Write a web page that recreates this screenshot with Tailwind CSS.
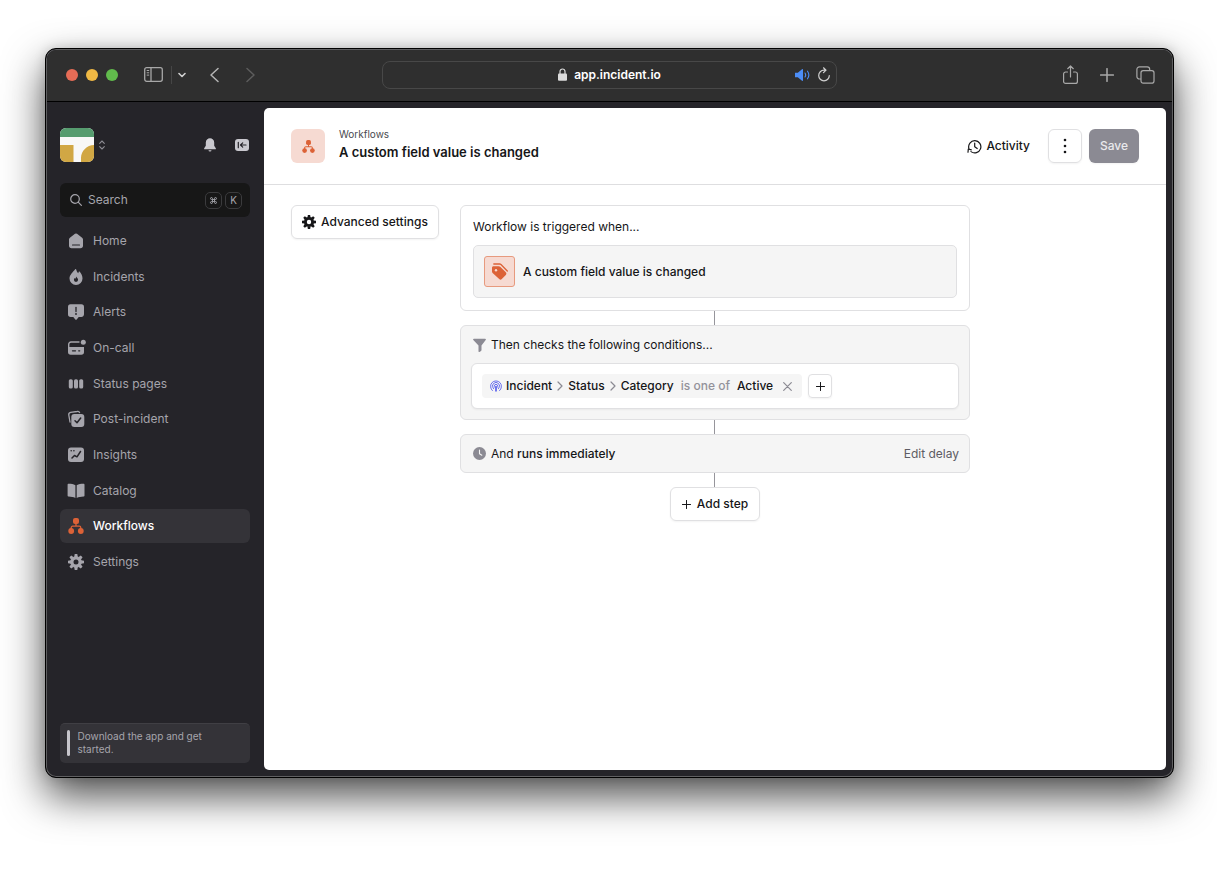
<!DOCTYPE html>
<html lang="en">
<head>
    <meta charset="UTF-8">
    <meta name="viewport" content="width=device-width, initial-scale=1.0">
    <title>A custom field value is changed | Workflows</title>
    <script src="https://cdn.jsdelivr.net/npm/@tailwindcss/browser@4"></script>
</head>
<body class="bg-white font-['Inter',sans-serif] text-xs leading-4 text-[#161618]">
    <!-- Shared icon shapes -->
    <svg class="hidden">
        <symbol id="icon-workflow" viewBox="0 0 16 16">
            <path d="M8 5v3.2M3.2 11V9.700a1.500 1.500 0 0 1 1.500-1.500h6.600a1.500 1.500 0 0 1 1.500 1.500V11" fill="none" stroke="currentColor" stroke-width="1.300"/>
            <rect x="5" y="0" width="6" height="6" rx="2" fill="currentColor"/>
            <circle cx="3.200" cy="13" r="2.900" fill="currentColor"/>
            <circle cx="12.800" cy="13" r="2.900" fill="currentColor"/>
        </symbol>
        <symbol id="icon-gear" viewBox="0 0 16 16">
            <g fill="currentColor">
                <path fill-rule="evenodd" d="M8 2.200a5.800 5.800 0 1 0 0 11.600a5.800 5.800 0 0 0 0-11.600zM8 5.500a2.500 2.500 0 1 1 0 5a2.500 2.500 0 0 1 0-5z"/>
                <path d="M6.700 0h2.600l.5 3h-3.600zM6.700 16h2.600l.5-3h-3.600zM0 6.700v2.600l3 .5v-3.600zM16 6.700v2.600l-3 .5v-3.600z"/>
                <path transform="rotate(45 8 8)" d="M6.700 0h2.600l.5 3h-3.600zM6.700 16h2.600l.5-3h-3.600zM0 6.700v2.600l3 .5v-3.600zM16 6.700v2.600l-3 .5v-3.600z"/>
            </g>
        </symbol>
        <symbol id="icon-plus" viewBox="0 0 10 10">
            <path d="M5 .5v9M.5 5h9" fill="none" stroke="currentColor" stroke-width="1.100" stroke-linecap="round"/>
        </symbol>
        <symbol id="icon-chevron" viewBox="0 0 6 10">
            <path d="M1 1l4 4-4 4" fill="none" stroke="currentColor" stroke-width="1.200" stroke-linecap="round" stroke-linejoin="round"/>
        </symbol>
    </svg>

    <div class="flex min-h-screen pt-12 pr-[43px] pb-[91px] pl-[45px]">
        <div class="flex flex-1 flex-col overflow-hidden rounded-[11px] border border-black bg-[#252429] shadow-[0_18px_42px_rgba(0,0,0,0.7),0_0_12px_rgba(0,0,0,0.15)] inset-ring inset-ring-[#5f5f61]">

            <!-- Browser toolbar -->
            <header class="m-px mb-0 flex h-[52px] items-center rounded-t-[9px] border-b border-black bg-[#2f2f2f] px-[17px] pb-0.5 text-[#a8a8a8]">
                <div class="flex flex-1 items-center">
                    <div class="ml-0.5 flex gap-2">
                        <span class="size-3 rounded-full bg-[#e66c56]"></span>
                        <span class="size-3 rounded-full bg-[#f0b944]"></span>
                        <span class="size-3 rounded-full bg-[#61bb4c]"></span>
                    </div>
                    <button class="ml-[26px]" aria-label="Sidebar">
                        <svg class="h-[15px] w-[19px]" viewBox="0 0 19 15" fill="none" stroke="currentColor" stroke-width="1.300">
                            <rect x=".7" y=".7" width="17.600" height="13.600" rx="2"/>
                            <path d="M7 1v13"/>
                            <path d="M2.700 3.500h2.500M2.700 5.800h2.500M2.700 8.100h2.500" stroke-width="1"/>
                        </svg>
                    </button>
                    <span class="ml-2 h-[18px] w-px bg-[#464646]"></span>
                    <button class="ml-1.5" aria-label="Tab groups">
                        <svg class="h-3 w-2" viewBox="0 0 8 12" fill="none" stroke="#d0d0d0" stroke-width="1.600" stroke-linecap="round" stroke-linejoin="round"><path d="M1 4.500l3 3 3-3"/></svg>
                    </button>
                    <button class="ml-6" aria-label="Back">
                        <svg class="h-4 w-[9px]" viewBox="0 0 9 16" fill="none" stroke="#b4b4b4" stroke-width="1.500" stroke-linecap="round" stroke-linejoin="round"><path d="M8 1.500L1 8l7 6.500"/></svg>
                    </button>
                    <button class="ml-[27px]" aria-label="Forward">
                        <svg class="h-4 w-[9px]" viewBox="0 0 9 16" fill="none" stroke="#5c5c5c" stroke-width="1.500" stroke-linecap="round" stroke-linejoin="round"><path d="M1 1.500L8 8l-7 6.500"/></svg>
                    </button>
                </div>

                <div class="flex h-7 w-[455px] items-center rounded-lg border border-[#484848] px-1.5 text-white">
                    <span class="flex-1"></span>
                    <svg class="mr-[7px] h-[13px] w-[9px]" viewBox="0 0 9 13"><path d="M2 6V3.500a2.500 2.500 0 0 1 5 0V6" fill="none" stroke="#dcdcdc" stroke-width="1.200"/><rect y="5.500" width="9" height="7.300" rx="1" fill="#dcdcdc"/></svg>
                    <span class="font-semibold">app.incident.io</span>
                    <span class="flex flex-1 items-center justify-end gap-2">
                        <svg class="h-3 w-[15px]" viewBox="0 0 15 12"><path d="M0 3.800h2.800L7 .3c.5-.4 1-.2 1 .4v10.600c0 .6-.5.8-1 .4L2.800 8.200H0z" fill="#4c8df6"/><path d="M10 4a3.500 3.500 0 0 1 0 4M12.500 2.200a6.500 6.500 0 0 1 0 7.600" fill="none" stroke="#4c8df6" stroke-width="1.100" stroke-linecap="round"/></svg>
                        <svg class="h-[15px] w-3" viewBox="0 0 12 15" fill="none" stroke="#d0d0d0" stroke-width="1.200" stroke-linecap="round" stroke-linejoin="round"><path d="M11.300 8.500A5.300 5.300 0 1 1 6 3.200h1.500M5.500.8l2.500 2.400-2.500 2.500"/></svg>
                    </span>
                </div>

                <div class="flex flex-1 items-center justify-end">
                    <button aria-label="Share">
                        <svg class="h-5 w-[15px]" viewBox="0 0 15 20" fill="none" stroke="currentColor" stroke-width="1.200" stroke-linecap="round" stroke-linejoin="round"><path d="M4.500 7H2.600A2 2 0 0 0 .6 9v7.400a2 2 0 0 0 2 2h9.800a2 2 0 0 0 2-2V9a2 2 0 0 0-2-2h-1.900M7.500 12V1M4.700 3.700L7.500 1l2.800 2.700"/></svg>
                    </button>
                    <button class="ml-[22px]" aria-label="New tab">
                        <svg class="size-3.5"><use href="#icon-plus"/></svg>
                    </button>
                    <button class="ml-[22px]" aria-label="Tab overview">
                        <svg class="h-[18px] w-[19px]" viewBox="0 0 19 18" fill="none" stroke="currentColor" stroke-width="1.200"><rect x="5" y="4.600" width="13" height="12.500" rx="2.200"/><path d="M5 13H3.400A2.500 2.500 0 0 1 .9 10.500V3.400A2.500 2.500 0 0 1 3.400.9h7.800a2.500 2.500 0 0 1 2.500 2.500v1.200"/></svg>
                    </button>
                </div>
            </header>

            <div class="flex flex-1 pr-[7px] pb-[7px]">
                <!-- Sidebar -->
                <aside class="flex w-[218px] flex-col px-3.5 pt-[26px] pb-[7px] text-[#a6a5ac]">
                    <div class="flex items-center pr-px">
                        <svg class="size-[34px] rounded-md" viewBox="0 0 34 34">
                            <rect width="34" height="34" fill="#f8f8f8"/>
                            <rect width="34" height="9" fill="#569c6f"/>
                            <path d="M0 17h13.500v17H0zM34 17v17H21v-4c0-7 6-13 13-13z" fill="#d1a744"/>
                        </svg>
                        <svg class="ml-[5px] h-[10px] w-1.5" viewBox="0 0 6 10" fill="none" stroke="#8b8a91" stroke-width="1.100" stroke-linecap="round" stroke-linejoin="round"><path d="M.7 3.300L3 1l2.300 2.300M.7 6.700L3 9l2.300-2.300"/></svg>
                        <button class="ml-auto" aria-label="Notifications">
                            <svg class="h-3.5 w-3" viewBox="0 0 12 14" fill="#c9c8ce"><path d="M6 .3a4.200 4.200 0 0 0-4.200 4.200v3.200L.2 10.300c-.3.600 0 1 .6 1h10.400c.6 0 .9-.4.600-1l-1.600-2.600V4.500A4.200 4.200 0 0 0 6 .3zM4.500 12.300a1.500 1.300 0 0 0 3 0z"/></svg>
                        </button>
                        <button class="ml-[19px]" aria-label="Collapse sidebar">
                            <svg class="h-3 w-3.5" viewBox="0 0 14 12"><rect width="14" height="12" rx="3" fill="#c9c8ce"/><path d="M3.300 3.300v5.400M11 6H5.600M7.700 3.900L5.500 6l2.200 2.100" fill="none" stroke="#252429" stroke-width="1.200" stroke-linecap="round" stroke-linejoin="round"/></svg>
                        </button>
                    </div>

                    <button class="mt-[21px] flex h-[34px] items-center rounded-md bg-[#171717] px-2">
                        <svg class="ml-0.5 size-3" viewBox="0 0 12 12" fill="none" stroke="currentColor" stroke-width="1.200" stroke-linecap="round"><circle cx="5" cy="5" r="4.300"/><path d="M8.200 8.200l3.200 3.200"/></svg>
                        <span class="ml-1.5">Search</span>
                        <kbd class="ml-auto flex size-[17px] items-center justify-center rounded-[5px] border border-[#3b3b3d]">
                            <svg class="size-[7px]" viewBox="0 0 8 8" fill="none" stroke="currentColor" stroke-width="1.100"><path d="M2.800 2.800h2.400v2.400H2.800zM2.800 2.800V1.700a1.100 1.100 0 1 0-1.100 1.100zM5.200 2.800h1.100a1.100 1.100 0 1 0-1.100-1.100zM5.200 5.200v1.100a1.100 1.100 0 1 0 1.100-1.100zM2.800 5.200H1.700a1.100 1.100 0 1 0 1.100 1.100z"/></svg>
                        </kbd>
                        <kbd class="ml-[3px] flex size-[17px] items-center justify-center rounded-[5px] border border-[#3b3b3d] font-['Inter',sans-serif] text-[10px]">K</kbd>
                    </button>

                    <nav class="mt-[7px] flex h-[355px] flex-col justify-between">
                        <a href="#" class="flex h-[34px] items-center gap-[9px] rounded-md px-2">
                            <svg class="size-4" viewBox="0 0 16 16"><path d="M7 .8a1.700 1.700 0 0 1 2 0l4.800 3.700c.8.600 1.200 1.200 1.200 2.200v6.100c0 1.500-1 2.500-2.500 2.500h-9C2 15.300 1 14.300 1 12.800V6.700c0-1 .4-1.600 1.200-2.200z" fill="currentColor"/><path d="M4.500 12h7" stroke="#252429" stroke-width="1.200" stroke-linecap="round"/></svg>
                            <span>Home</span>
                        </a>
                        <a href="#" class="flex h-[34px] items-center gap-[9px] rounded-md px-2">
                            <svg class="size-4" viewBox="0 0 16 16"><path d="M7.200.2c.5-.4 1 0 1.100.5.3 1.500 1 2.500 1.900 3.500.3-.5.4-.9.500-1.300.2-.5.700-.6 1.100-.1 1.500 1.800 2.700 4 2.700 6.400A6.500 6.500 0 0 1 8 15.900a6.500 6.500 0 0 1-6.500-6.500C1.500 6 4.500 3.500 7.200.2z" fill="currentColor"/><path d="M8.200 7.600c.3 1 1.900 1.800 1.900 3.200a2.100 2.100 0 0 1-4.200 0c0-.8.400-1.300.9-1.700l.6.600c.4-.6.600-1.300.8-2.100z" fill="#252429"/></svg>
                            <span>Incidents</span>
                        </a>
                        <a href="#" class="flex h-[34px] items-center gap-[9px] rounded-md px-2">
                            <svg class="size-4" viewBox="0 0 16 16"><path d="M3 .3h10.200A2.700 2.700 0 0 1 16 3v7.300c0 1.500-1.200 2.700-2.700 2.700h-2.600L8.700 15.400c-.4.500-1 .5-1.400 0L5.300 13H2.700A2.700 2.700 0 0 1 0 10.300V3A2.700 2.700 0 0 1 3 .3z" fill="currentColor"/><path d="M8 3.500v4" stroke="#252429" stroke-width="1.300" stroke-linecap="round"/><circle cx="8" cy="10" r=".9" fill="#252429"/></svg>
                            <span>Alerts</span>
                        </a>
                        <a href="#" class="flex h-[34px] items-center gap-[9px] rounded-md px-2">
                            <svg class="size-4 overflow-visible" viewBox="0 0 16 16"><circle cx="15.300" cy="2.300" r="2.500" fill="currentColor"/><path d="M.7 8.500V4.300A2.300 2.300 0 0 1 3 2h8" fill="none" stroke="currentColor" stroke-width="1.400" stroke-linecap="round"/><path d="M0 7h16v5a2.700 2.700 0 0 1-2.700 2.700H2.700A2.700 2.700 0 0 1 0 12z" fill="currentColor"/><path d="M4.500 10.800h3M10.700 10.800h1" stroke="#252429" stroke-width="1.300" stroke-linecap="round"/></svg>
                            <span>On-call</span>
                        </a>
                        <a href="#" class="flex h-[34px] items-center gap-[9px] rounded-md px-2">
                            <svg class="size-4" viewBox="0 0 16 16" fill="currentColor"><rect x=".8" y="3.200" width="4" height="9.400" rx="1.600"/><rect x="6" y="3.200" width="4" height="9.400" rx="1.600"/><rect x="11.200" y="3.200" width="4" height="9.400" rx="1.600"/></svg>
                            <span>Status pages</span>
                        </a>
                        <a href="#" class="flex h-[34px] items-center gap-[9px] rounded-md px-2">
                            <svg class="size-4 overflow-visible" viewBox="0 0 16 16"><path d="M2 11L.8 4.200A2.400 2.400 0 0 1 2.600 1.400L9 .5a2.400 2.400 0 0 1 2.600 1" fill="none" stroke="currentColor" stroke-width="1.300" stroke-linecap="round"/><rect x="3.300" y="3" width="13" height="13" rx="3" fill="currentColor"/><path d="M7 9.800l2 2L12.700 7" fill="none" stroke="#252429" stroke-width="1.500" stroke-linecap="round" stroke-linejoin="round"/></svg>
                            <span>Post-incident</span>
                        </a>
                        <a href="#" class="flex h-[34px] items-center gap-[9px] rounded-md px-2">
                            <svg class="size-4" viewBox="0 0 16 16"><rect y=".5" width="16" height="14.500" rx="3" fill="currentColor"/><path d="M4 11l2.500-2.500L9 9.800l3.500-5.300" fill="none" stroke="#252429" stroke-width="1.500" stroke-linecap="round" stroke-linejoin="round"/><circle cx="3.200" cy="3.700" r=".8" fill="#252429"/><circle cx="5.900" cy="3.700" r=".8" fill="#252429"/></svg>
                            <span>Insights</span>
                        </a>
                        <a href="#" class="flex h-[34px] items-center gap-[9px] rounded-md px-2">
                            <svg class="size-4 overflow-visible" viewBox="0 0 16 16" fill="currentColor"><path d="M7.400 2.200C5.500 1.200 3.200.8.600.8c-.6 0-1 .4-1 1v10.700c0 .6.400 1 1 1 2.600.1 4.900.5 6.800 1.500zM8.700 2.200c1.900-1 4.200-1.400 6.800-1.400.6 0 1 .4 1 1v10.700c0 .6-.4 1-1 1-2.600.1-4.900.5-6.800 1.500z"/></svg>
                            <span>Catalog</span>
                        </a>
                        <a href="#" aria-current="page" class="flex h-[34px] items-center gap-[9px] rounded-md bg-[#343338] px-2 font-medium text-white">
                            <svg class="size-4 text-[#dc6237]"><use href="#icon-workflow"/></svg>
                            <span>Workflows</span>
                        </a>
                        <a href="#" class="flex h-[34px] items-center gap-[9px] rounded-md px-2">
                            <svg class="size-4"><use href="#icon-gear"/></svg>
                            <span>Settings</span>
                        </a>
                    </nav>

                    <div class="mt-auto flex gap-[7px] rounded-[5px] border-t border-[#403f44] bg-[#343338] pt-1.5 pr-8 pb-[7px] pl-[7px] text-[10px] leading-[13px]">
                        <span class="w-1 rounded-sm bg-[#c7c6cc]"></span>
                        <p>Download the app and get started.</p>
                    </div>
                </aside>

                <!-- Workflow editor -->
                <main class="mt-1.5 flex-1 rounded-[5px] bg-white">
                    <div class="flex h-[77px] items-center border-b border-[#dedee0] px-[27px]">
                        <span class="flex size-[34px] items-center justify-center rounded-md bg-[#f6dad2] text-[#dc6237]">
                            <svg class="size-[13px]"><use href="#icon-workflow"/></svg>
                        </span>
                        <div class="ml-3.5 pb-1">
                            <a href="#" class="block text-[10px] text-[#4a4a50]">Workflows</a>
                            <h1 class="text-[13px] leading-5 font-semibold">A custom field value is changed</h1>
                        </div>
                        <button class="ml-auto flex items-center gap-1 font-medium">
                            <svg class="size-[15px]" viewBox="0 0 15 15" fill="none" stroke="currentColor" stroke-width="1.200" stroke-linecap="round" stroke-linejoin="round"><path d="M1.900 9.500A6.100 6.100 0 1 1 4 12.600M1 13.200l.3-3.200 3 .9M7.700 4v3.700l2.500 1.800"/></svg>
                            Activity
                        </button>
                        <button class="ml-[18px] flex size-[34px] items-center justify-center rounded-md border border-[#e0e0e2] shadow-xs" aria-label="More">
                            <svg class="h-4 w-1" viewBox="0 0 4 16" fill="currentColor"><circle cx="2" cy="2" r="1.300"/><circle cx="2" cy="8" r="1.300"/><circle cx="2" cy="14" r="1.300"/></svg>
                        </button>
                        <button class="ml-[7px] h-[34px] w-[50px] rounded-md bg-[#8b8a93] font-medium text-[#e9e9ec] shadow-xs">Save</button>
                    </div>

                    <div class="grid grid-cols-[1fr_510px_1fr] items-start px-[27px] pt-5">
                        <button class="flex h-[34px] items-center gap-[5px] justify-self-start rounded-md border border-[#e0e0e2] px-2.5 font-medium whitespace-nowrap shadow-xs">
                            <svg class="size-3.5"><use href="#icon-gear"/></svg>
                            Advanced settings
                        </button>

                        <div class="flex flex-col items-center">
                            <section class="h-[106px] w-full rounded-md border border-[#e0e0e2] px-3 pt-[13px]">
                                <h2>Workflow is triggered when...</h2>
                                <div class="mt-2.5 flex h-[53px] items-center gap-2 rounded-[5px] border border-[#e0e0e2] bg-[#f5f5f5] px-2.5 font-medium">
                                    <span class="flex size-[31px] items-center justify-center rounded-[3px] border border-[#e79a7e] bg-[#f6dad2]">
                                        <svg class="size-[17px]" viewBox="0 0 17 17"><path d="M2.500 3.200h5.300c.5 0 1 .2 1.400.6l5.600 5.500c.8.800.8 1.800 0 2.600l-4 4.200c-.8.800-1.800.8-2.600 0L1.600 10A2 2 0 0 1 1 8.600V4.700c0-.9.600-1.500 1.500-1.500z" fill="#dc6237"/><path d="M2.800 1h5.900c.5 0 .9.200 1.300.5L16.300 8" fill="none" stroke="#dc6237" stroke-width="1.300" stroke-linecap="round"/><circle cx="5" cy="7.200" r="1.200" fill="#f6dad2"/></svg>
                                    </span>
                                    A custom field value is changed
                                </div>
                            </section>
                            <span class="mr-px h-3.5 w-px bg-[#96959b]"></span>

                            <section class="h-[95px] w-full rounded-md border border-[#e0e0e2] bg-[#f5f5f5] px-2.5 pt-[11px]">
                                <h2 class="flex items-center gap-[5px] pl-0.5">
                                    <svg class="h-3.5 w-[13px]" viewBox="0 0 13 14" fill="#8b8a93"><path d="M1 .7h11c.8 0 1.200.8.700 1.400L8.500 7.400v4.700c0 .4-.2.700-.5.900l-1.500.9c-.6.300-1 0-1-.6V7.400L.3 2.100C-.2 1.500.2.7 1 .7z"/></svg>
                                    Then checks the following conditions...
                                </h2>
                                <div class="mt-2.5 flex h-[46px] items-center gap-1.5 rounded-md border border-[#e0e0e2] bg-white px-2.5 shadow-xs">
                                    <div class="flex h-6 items-center rounded bg-[#f5f5f5] px-2 font-medium">
                                        <svg class="mr-1 size-3" viewBox="0 0 12 12" fill="none" stroke="#5b62ec" stroke-width=".9" stroke-linecap="round"><path d="M2.400 10.600a5.500 5.500 0 1 1 7.200 0M3.500 8.700a3.600 3.600 0 1 1 5 0M4.800 7.500a1.800 1.800 0 1 1 2.400 0"/><path d="M6 6.500v4.300" stroke-width="1.700"/></svg>
                                        Incident
                                        <svg class="mx-[5px] h-2.5 w-1.5 text-[#8b8a93]"><use href="#icon-chevron"/></svg>
                                        Status
                                        <svg class="mx-[5px] h-2.5 w-1.5 text-[#8b8a93]"><use href="#icon-chevron"/></svg>
                                        Category
                                        <span class="mx-[7px] text-[#93929a]">is one of</span>
                                        Active
                                        <button class="ml-2.5 pr-0.5" aria-label="Remove condition">
                                            <svg class="size-[9px]" viewBox="0 0 9 9" stroke="#8b8a93" stroke-width="1.200" stroke-linecap="round"><path d="M.7.7l7.600 7.600M8.300.7L.7 8.300"/></svg>
                                        </button>
                                    </div>
                                    <button class="flex size-6 items-center justify-center rounded border border-[#e0e0e2] shadow-xs" aria-label="Add condition">
                                        <svg class="size-[9px]"><use href="#icon-plus"/></svg>
                                    </button>
                                </div>
                            </section>
                            <span class="mr-px h-3.5 w-px bg-[#96959b]"></span>

                            <section class="flex h-[39px] w-full items-center gap-[5px] rounded-md border border-[#e0e0e2] bg-[#f5f5f5] pr-2.5 pl-3">
                                <svg class="size-[13px]" viewBox="0 0 13 13"><circle cx="6.500" cy="6.500" r="6.500" fill="#8b8a93"/><path d="M6.500 3v3.700l2.300 1.500" fill="none" stroke="#f5f5f5" stroke-width="1.100" stroke-linecap="round" stroke-linejoin="round"/></svg>
                                <h2>And <span class="font-medium">runs immediately</span></h2>
                                <button class="ml-auto text-[#5d5c63]">Edit delay</button>
                            </section>
                            <span class="mr-px h-3.5 w-px bg-[#96959b]"></span>

                            <button class="flex h-[34px] items-center gap-1.5 rounded-md border border-[#e0e0e2] px-[11px] font-medium shadow-xs">
                                <svg class="size-[9px]"><use href="#icon-plus"/></svg>
                                Add step
                            </button>
                        </div>
                    </div>
                </main>
            </div>
        </div>
    </div>
</body>
</html>
